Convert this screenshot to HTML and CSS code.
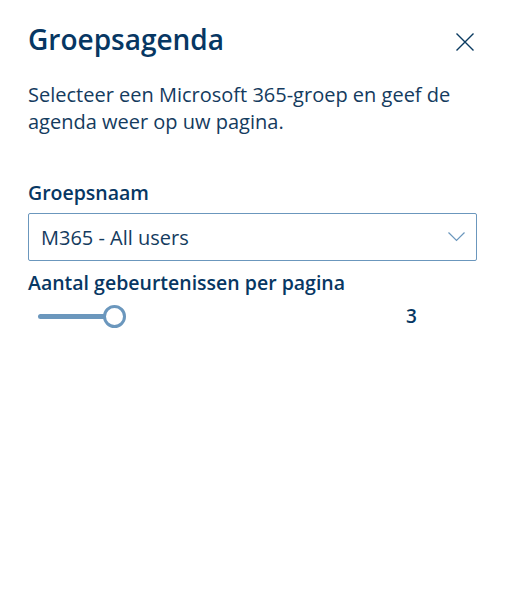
FILE: index.html
```html
<!DOCTYPE html>
<html lang="nl">
<head>
<meta charset="utf-8">
<title>Groepsagenda</title>
<link rel="stylesheet" href="styles.css">
</head>
<body>
<div class="panel">
  <div class="header">
    <h1 class="title">Groepsagenda</h1>
    <button class="close" aria-label="Sluiten">
      <svg width="18" height="18" viewBox="0 0 18 18"><path d="M0.5 0.5 L17.5 17.5 M17.5 0.5 L0.5 17.5" stroke="#0a3a60" stroke-width="1.4" fill="none"/></svg>
    </button>
  </div>
  <p class="desc">Selecteer een Microsoft 365-groep en geef de agenda weer op uw pagina.</p>
  <div class="field">
    <label class="label">Groepsnaam</label>
    <div class="dropdown">
      <span class="dd-text">M365 - All users</span>
      <svg class="chev" width="17" height="10" viewBox="0 0 17 10"><path d="M0.5 0.5 L8.5 8.5 L16.5 0.5" stroke="#6b97bd" stroke-width="1.2" fill="none"/></svg>
    </div>
  </div>
  <div class="field2">
    <label class="label">Aantal gebeurtenissen per pagina</label>
    <div class="slider-row">
      <div class="slider">
        <div class="track"><div class="fill" style="width:76px"></div></div>
        <div class="thumb"></div>
      </div>
      <span class="value">3</span>
    </div>
  </div>
</div>
</body>
</html>
```
FILE: styles.css
```css
html, body {
  margin: 0;
  padding: 0;
  background: #fff;
}
body {
  font-family: "Open Sans", "Noto Sans", sans-serif;
  color: #0a3a60;
}
.panel {
  width: 449px;
  padding: 19px 0 0 28px;
}
.header {
  display: flex;
  justify-content: space-between;
  align-items: center;
  height: 40px;
}
.title {
  margin: 0;
  font-size: 28px;
  line-height: 36px;
  font-weight: 600;
  color: #073763;
  letter-spacing: 0;
}
.close {
  border: 0;
  background: none;
  padding: 0;
  margin-right: 3px;
  margin-top: 6px;
  width: 18px;
  height: 18px;
  display: flex;
}
.desc {
  margin: 22px 0 0 0;
  font-size: 20px;
  line-height: 27px;
  color: #143b5e;
  width: 445px;
}
.field {
  margin-top: 46px;
}
.label {
  display: block;
  font-size: 19.5px;
  font-weight: 600;
  line-height: 24px;
  color: #073763;
}
.dropdown {
  margin-top: 8px;
  height: 46px;
  border: 1px solid #6b97bd;
  border-radius: 2px;
  display: flex;
  align-items: center;
  justify-content: space-between;
  padding: 0 11px 0 12px;
}
.dd-text {
  font-size: 20px;
  color: #143b5e;
}
.field2 {
  margin-top: 10px;
}
.slider-row {
  display: flex;
  align-items: center;
  margin-top: 6px;
  height: 30px;
}
.slider {
  position: relative;
  width: 366px;
  height: 30px;
  margin-left: 10px;
}
.track {
  position: absolute;
  left: 0;
  top: 13px;
  width: 100%;
  height: 5px;
}
.fill {
  height: 5px;
  background: #6b97bd;
  border-radius: 3px;
}
.thumb {
  position: absolute;
  left: 65px;
  top: 4px;
  width: 17px;
  height: 17px;
  border: 3px solid #6b97bd;
  border-radius: 50%;
  background: #fff;
}
.value {
  margin-left: 2px;
  font-size: 19px;
  font-weight: 600;
  color: #073763;
}
```
